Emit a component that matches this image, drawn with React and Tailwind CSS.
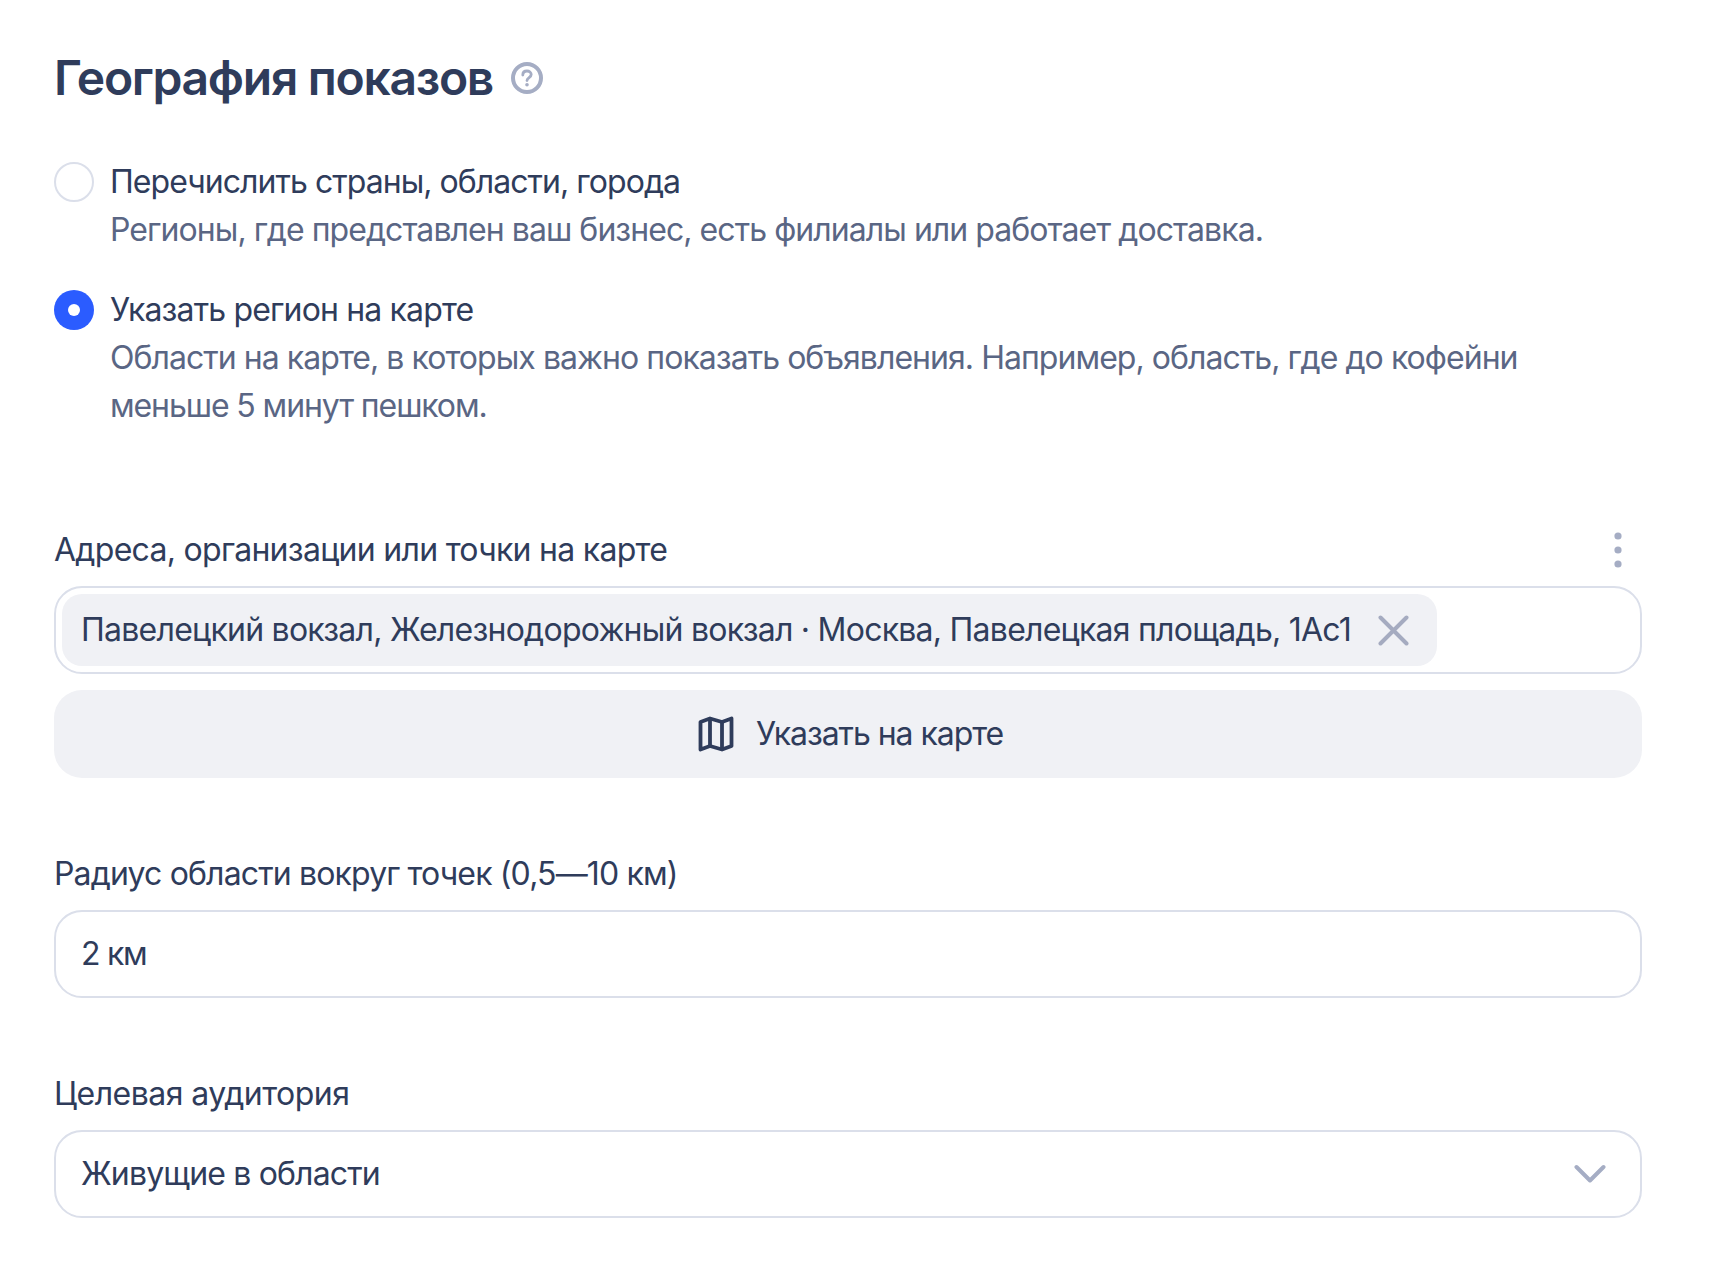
const FONT = "font-['Inter',sans-serif]";

function RadioOption({ checked, title, titleClass = '', children }) {
  return (
    <div className="flex">
      <div className="h-12 w-10 shrink-0 flex items-center">
        {checked ? (
          <div className="w-10 h-10 rounded-full bg-[#2b5cff] flex items-center justify-center">
            <div className="w-3 h-3 rounded-full bg-white" />
          </div>
        ) : (
          <div className="w-10 h-10 rounded-full border-2 border-[#dbdfea] bg-white" />
        )}
      </div>
      <div className="ml-4">
        <div className={`text-[#2f3c5b] ${titleClass}`}>{title}</div>
        <div className="text-[#5a6684]">{children}</div>
      </div>
    </div>
  );
}

function FieldLabel({ children, className = '' }) {
  return <div className={`text-[#2f3c5b] ${className}`}>{children}</div>;
}

function MapIcon() {
  return (
    <svg width="36" height="36" viewBox="0 0 36 36" fill="none" stroke="#2f3c5b" strokeWidth="3.8" strokeLinejoin="round">
      <path d="M2.5 6 L12 2.5 L24 6 L33.5 2.5 V30 L24 33.5 L12 30 L2.5 33.5 Z" />
      <path d="M12 2.5 V30 M24 6 V33.5" />
    </svg>
  );
}

export default function App() {
  return (
    <div className={`w-[1712px] min-h-[1272px] bg-white pt-[50px] pl-[54px] pr-[70px] text-[32px] leading-[48px] tracking-[-0.85px] ${FONT}`}>
      <div className="flex items-center">
        <h1 className="text-[48px] leading-[56px] font-semibold tracking-[-1.3px] text-[#2f3c5b]">География показов</h1>
        <svg className="ml-[18px]" width="32" height="32" viewBox="0 0 32 32" fill="none" stroke="#a5adc4">
          <circle cx="16" cy="16" r="14" strokeWidth="4" />
          <path d="M11.8 13 C11.8 10.4 13.6 9 16 9 C18.4 9 20.2 10.5 20.2 12.6 C20.2 15.6 16 15.6 16 18.6" strokeWidth="2.8" strokeLinecap="round" />
          <circle cx="16" cy="22.8" r="1.8" fill="#a5adc4" stroke="none" />
        </svg>
      </div>

      <div className="mt-[52px] flex flex-col gap-8">
        <RadioOption title="Перечислить страны, области, города" titleClass="tracking-[-0.95px]">
          <span className="tracking-[-0.94px]">Регионы, где представлен ваш бизнес, есть филиалы или работает доставка.</span>
        </RadioOption>
        <RadioOption checked title="Указать регион на карте">
          <span className="tracking-[-0.95px]">Области на карте, в которых важно показать объявления. Например, область, где до кофейни</span>
          <br />
          <span className="tracking-[-1.1px]">меньше 5 минут пешком.</span>
        </RadioOption>
      </div>

      <div className="mt-24 flex items-center justify-between">
        <FieldLabel className="tracking-[-0.71px]">Адреса, организации или точки на карте</FieldLabel>
        <svg className="mr-[20px]" width="8" height="36" viewBox="0 0 8 36" fill="#a5adc4">
          <circle cx="4" cy="4" r="3.6" />
          <circle cx="4" cy="18" r="3.6" />
          <circle cx="4" cy="32" r="3.6" />
        </svg>
      </div>
      <div className="mt-3 h-[88px] rounded-[28px] border-2 border-[#dbdfea] flex items-center px-[6px]">
        <div className="h-[72px] rounded-[20px] bg-[#f0f1f5] flex items-center pl-[19px] pr-[28px] text-[#2f3c5b] tracking-[-0.75px]">
          <span>Павелецкий вокзал, Железнодорожный вокзал · Москва, Павелецкая площадь, 1Ас1</span>
          <svg className="ml-[27px]" width="31" height="31" viewBox="0 0 31 31" fill="none" stroke="#a5abc0" strokeWidth="4" strokeLinecap="round">
            <path d="M2.5 2.5 L28.5 28.5 M28.5 2.5 L2.5 28.5" />
          </svg>
        </div>
      </div>
      <div className="mt-4 h-[88px] rounded-[28px] bg-[#f0f1f5] flex items-center justify-center gap-[22px] pl-[5px] text-[#2f3c5b] tracking-[-1.05px]">
        <MapIcon />
        <span>Указать на карте</span>
      </div>

      <FieldLabel className="mt-[72px]">Радиус области вокруг точек (0,5—10 км)</FieldLabel>
      <div className="mt-3 h-[88px] rounded-[28px] border-2 border-[#dbdfea] flex items-center px-[25px] text-[#2f3c5b] tracking-[-1.3px]">
        2 км
      </div>

      <FieldLabel className="mt-[72px] tracking-[-0.53px]">Целевая аудитория</FieldLabel>
      <div className="mt-3 h-[88px] rounded-[28px] border-2 border-[#dbdfea] flex items-center justify-between pl-[25px] pr-[34px] text-[#2f3c5b]">
        <span>Живущие в области</span>
        <svg width="32" height="20" viewBox="0 0 32 20" fill="none" stroke="#a5adc4" strokeWidth="4" strokeLinecap="round" strokeLinejoin="round">
          <path d="M2.5 3 L16 16.5 L29.5 3" />
        </svg>
      </div>
    </div>
  );
}
